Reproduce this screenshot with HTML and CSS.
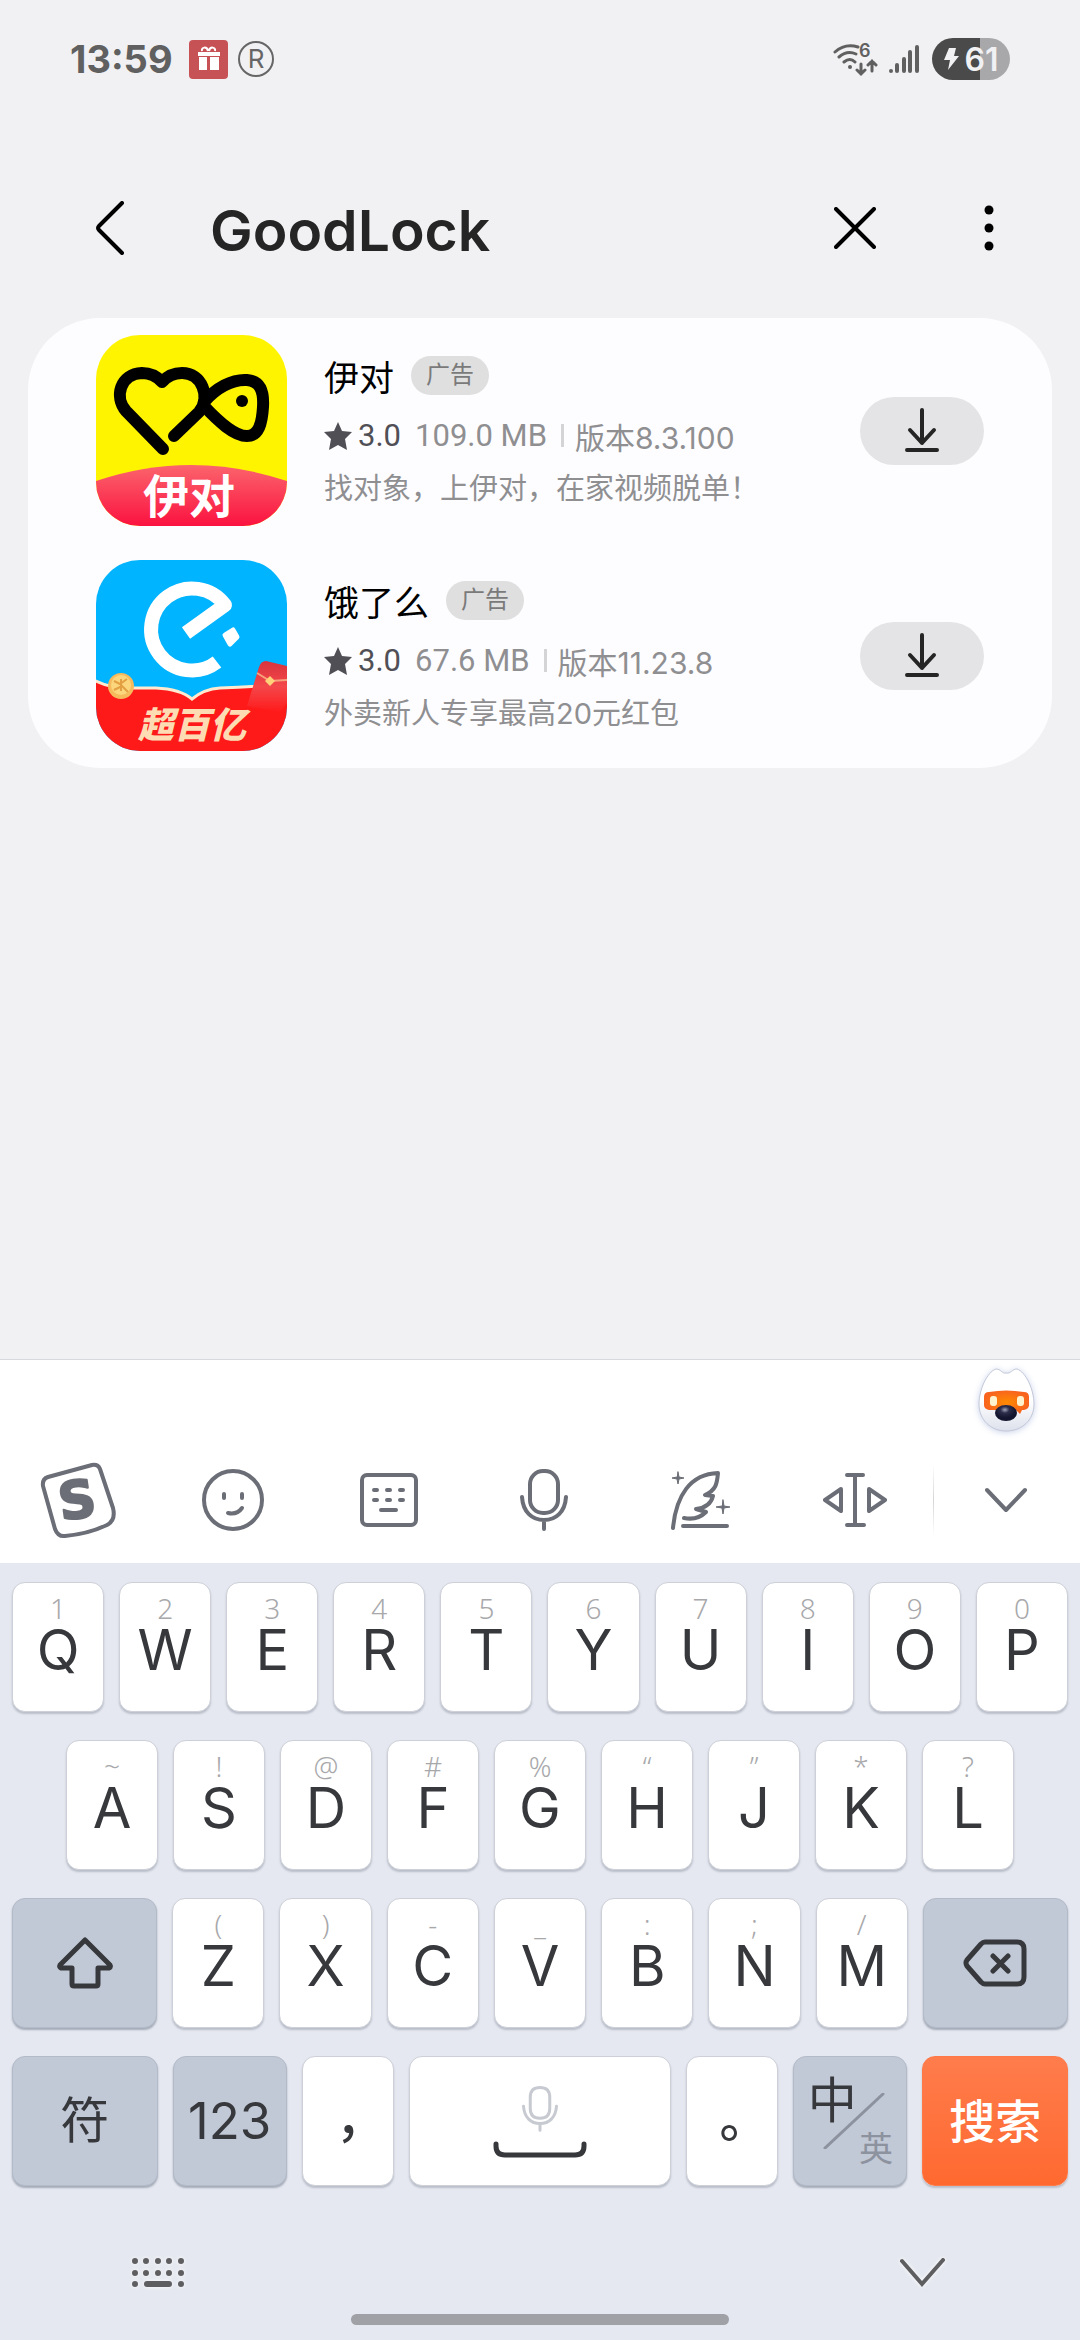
FILE: index.html
```html
<!DOCTYPE html>
<html lang="zh-CN">
<head>
    <meta charset="UTF-8">
    <meta name="viewport" content="width=device-width, initial-scale=1.0">
    <title>GoodLock</title>
    <link rel="stylesheet" href="styles.css">
</head>
<body>

<!-- Status bar -->
<div class="status-bar">
    <span class="clock">13:59</span>
    <svg class="gift-icon" width="39" height="39" viewBox="0 0 39 39">
        <rect width="39" height="39" rx="4" fill="#c75256"/>
        <path d="M9 12h22v4H9zM10 17h8v13h-8zM21 17h9v13h-9z" fill="#fff"/>
        <path d="M19 11c-1-5-7-4-6 0M20 11c1-5 7-4 6 0" fill="none" stroke="#fff" stroke-width="2"/>
    </svg>
    <svg class="r-icon" width="37" height="37" viewBox="0 0 37 37">
        <circle cx="18" cy="18" r="17" fill="none" stroke="#666" stroke-width="2"/>
        <text x="18" y="27" text-anchor="middle" font-size="26" fill="#666">R</text>
    </svg>
    <div class="status-right">
        <svg width="45" height="42" viewBox="0 -5 45 42" fill="none" stroke="#606060" stroke-width="3" stroke-linecap="round">
            <path d="M2 9Q12 0 25 4M6 14Q14 7 23 11M11 19Q17 14 22 19"/>
            <circle cx="17" cy="24" r="2" fill="#606060" stroke="none"/>
            <path d="M28 21v10M24 27l4 4 4-4M39 28V18M35 22l4-4 4 4"/>
            <text x="26" y="14" font-size="18" font-weight="600" fill="#606060" stroke="none">6</text>
        </svg>
        <svg width="32" height="30" viewBox="0 0 32 30" stroke="#606060" stroke-width="4" stroke-linecap="round">
            <path d="M2 27v0M8 21v6M15 15v12M21 8v19M28 3v24"/>
        </svg>
        <span class="battery">
            <svg width="15" height="22" viewBox="0 0 15 22"><path d="M5 0h7l-2 8h5L4 22l2-10H0z" fill="#f1f1f3"/></svg>
            61
        </span>
    </div>
</div>

<!-- Search header -->
<header class="search-header">
    <button type="button" class="icon-button" aria-label="返回">
        <svg width="28" height="54" viewBox="0 0 28 54"><path d="M26 2L3 25Q1 27 3 29L26 52" fill="none" stroke="#000" stroke-width="4" stroke-linecap="round"/></svg>
    </button>
    <input type="text" class="search-input" value="GoodLock" aria-label="搜索">
    <button type="button" class="icon-button" aria-label="清除">
        <svg width="42" height="42" viewBox="0 0 42 42"><path d="M2 2l38 38M40 2L2 40" stroke="#000" stroke-width="4" stroke-linecap="round"/></svg>
    </button>
    <button type="button" class="icon-button more-button" aria-label="更多选项">
        <svg width="10" height="46" viewBox="0 0 10 46"><circle cx="5" cy="5" r="4.5"/><circle cx="5" cy="23" r="4.5"/><circle cx="5" cy="41" r="4.5"/></svg>
    </button>
</header>

<!-- Results -->
<main class="results">
    <article class="app-row">
        <svg class="app-icon" viewBox="0 0 191 191">
            <defs>
                <linearGradient id="pink" x1="0" y1="0" x2="0" y2="1">
                    <stop offset="0" stop-color="#fb646c"/>
                    <stop offset="1" stop-color="#fb1240"/>
                </linearGradient>
            </defs>
            <rect width="191" height="191" fill="#fff400"/>
            <path d="M0 146Q95 114 191 146V191H0z" fill="url(#pink)"/>
            <g fill="none" stroke="#000" stroke-width="12" stroke-linecap="round" stroke-linejoin="round">
                <path d="M67 114L30 76C18 62 24 39 46 38Q58 38 66 47Q74 38 86 38C106 38 115 62 103 77L78 101"/>
                <path d="M108 67C120 53 136 44 151 45C164 46 168 56 167 72C166 88 163 101 151 101C138 101 122 86 108 71"/>
            </g>
            <circle cx="146" cy="66" r="6"/>
            <text x="93" y="178" text-anchor="middle" font-size="46" font-weight="700" fill="#fff">伊对</text>
        </svg>
        <div class="app-info">
            <h2>伊对 <span class="ad-badge">广告</span></h2>
            <p class="app-meta">
                <svg width="28" height="28" viewBox="0 0 28 28"><path d="M14 0l4 9 10 1-7 7 2 11-9-5-9 5 2-11-7-7 10-1z" fill="#504f56"/></svg>
                <span class="rating">3.0</span>
                <span class="size">109.0 MB</span>
                <span class="version">版本8.3.100</span>
            </p>
            <p class="app-desc">找对象，上伊对，在家视频脱单！</p>
        </div>
        <button type="button" class="download-button" aria-label="下载 伊对">
            <svg width="34" height="46" viewBox="0 0 34 46"><path d="M17 2v33M5 22l12 13 12-13M2 42h30"/></svg>
        </button>
    </article>

    <article class="app-row">
        <svg class="app-icon" viewBox="0 0 191 191">
            <defs>
                <linearGradient id="envelope" x1="0" y1="0" x2="0" y2="1">
                    <stop offset="0" stop-color="#d8333c"/>
                    <stop offset="0.5" stop-color="#f4474b"/>
                    <stop offset="1" stop-color="#ff1a1a"/>
                </linearGradient>
            </defs>
            <rect width="191" height="191" fill="#00b4ff"/>
            <path d="M121 102A41 41 0 1 1 129 45L90 73" fill="none" stroke="#fff" stroke-width="14" stroke-linejoin="round"/>
            <path d="M129 75L137 70 141 77 134 84z" fill="#fff" stroke="#fff" stroke-width="5" stroke-linejoin="round"/>
            <path d="M-4 119Q14 129 37 128H60Q84 129 96 139Q108 129 124 128Q160 127 195 123V195H-4z" fill="#ff1a1a" stroke="#ffe9cf" stroke-width="3"/>
            <circle cx="25" cy="126" r="13" fill="#f6ba5c"/>
            <circle cx="25" cy="125" r="10" fill="#fbd67c"/>
            <path d="M18 121l6 3 7-5M18 130l8-4 6 6M25 119v12" fill="none" stroke="#e3a043" stroke-width="2"/>
            <path d="M170 101L195 107V138L184 152 151 146 163 107Q165 101 170 101z" fill="url(#envelope)"/>
            <path d="M161 113l13 8 19-1" fill="none" stroke="#f8a27c" stroke-width="2"/>
            <path d="M174 116l5 5-5 5-5-5z" fill="#ffd27a"/>
            <text x="96" y="178" text-anchor="middle" font-size="36" font-weight="900" font-style="italic" fill="#fddcb4">超百亿</text>
        </svg>
        <div class="app-info">
            <h2>饿了么 <span class="ad-badge">广告</span></h2>
            <p class="app-meta">
                <svg width="28" height="28" viewBox="0 0 28 28"><path d="M14 0l4 9 10 1-7 7 2 11-9-5-9 5 2-11-7-7 10-1z" fill="#504f56"/></svg>
                <span class="rating">3.0</span>
                <span class="size">67.6 MB</span>
                <span class="version">版本11.23.8</span>
            </p>
            <p class="app-desc">外卖新人专享最高20元红包</p>
        </div>
        <button type="button" class="download-button" aria-label="下载 饿了么">
            <svg width="34" height="46" viewBox="0 0 34 46"><path d="M17 2v33M5 22l12 13 12-13M2 42h30"/></svg>
        </button>
    </article>
</main>

<!-- Keyboard -->
<section class="keyboard">
    <div class="mascot-strip">
        <button type="button" class="icon-button" aria-label="助手">
            <svg class="mascot" width="57" height="64" viewBox="0 0 57 64">
                <defs>
                    <linearGradient id="face" x1="0" y1="0" x2="0" y2="1">
                        <stop offset="0.5" stop-color="#fff"/>
                        <stop offset="1" stop-color="#dde1ec"/>
                    </linearGradient>
                    <radialGradient id="visor">
                        <stop offset="0" stop-color="#ff8a00"/>
                        <stop offset="1" stop-color="#f8641e"/>
                    </radialGradient>
                    <radialGradient id="nose" cx="0.45" cy="0.3">
                        <stop offset="0" stop-color="#a3a4b8"/>
                        <stop offset="0.4" stop-color="#2c2e4b"/>
                        <stop offset="1" stop-color="#14152e"/>
                    </radialGradient>
                </defs>
                <path d="M28 5C33 6 34 1 39 1C48 4 56 22 56 36C56 52 44 63 28 63C13 63 1 52 1 36C1 22 9 4 18 1C23 1 24 6 28 5z" fill="url(#face)" stroke="#c3c8d8"/>
                <path d="M6 29Q6 24 11 24Q28 21 46 24Q51 24 51 29V37Q51 41 46 42H44L42 46 38 42H11Q6 41 6 37z" fill="url(#visor)"/>
                <rect x="12" y="28" width="7" height="10" rx="3" fill="#fff2cf"/>
                <rect x="39" y="28" width="7" height="10" rx="3" fill="#fff2cf"/>
                <ellipse cx="28" cy="45" rx="11" ry="8" fill="url(#nose)"/>
            </svg>
        </button>
    </div>

    <div class="toolbar">
        <button type="button" aria-label="搜狗">
            <svg width="80" height="80" viewBox="0 0 80 80">
                <path d="M10 17L54 5Q60 4 62 9L75 48Q78 60 69 65Q50 74 27 76Q20 77 17 69L5 26Q4 19 10 17z"/>
                <text class="logo-letter" x="39" y="58" text-anchor="middle" transform="rotate(-8 40 40)">S</text>
            </svg>
        </button>
        <button type="button" aria-label="表情">
            <svg width="62" height="62" viewBox="0 0 62 62"><circle cx="31" cy="31" r="29"/><path d="M22 25v4M40 25v4M26 44Q35 46 40 39"/></svg>
        </button>
        <button type="button" aria-label="键盘">
            <svg width="58" height="54" viewBox="0 0 58 54"><rect x="2" y="2" width="54" height="50" rx="5"/><path d="M14 17h3M27 17h3M40 17h3M14 27h3M27 27h3M40 27h3M21 37h15"/></svg>
        </button>
        <button type="button" aria-label="语音">
            <svg width="48" height="62" viewBox="0 0 48 62"><rect x="10" y="2" width="28" height="42" rx="13"/><path d="M2 28C3 43 12 51 24 51C36 51 45 43 46 28M24 51v9"/></svg>
        </button>
        <button type="button" aria-label="智能写作">
            <svg width="60" height="60" viewBox="0 0 60 60">
                <path d="M3 58C6 26 20 4 48 3C47 14 46 20 35 25L43 26C41 34 36 38 26 39L36 42C31 47 24 50 14 48M13 56h44"/>
                <path class="sparkle" d="M8 2l1 5 5 1-5 1-1 5-1-5-5-1 5-1zM53 30l1 6 6 1-6 1-1 6-1-6-6-1 6-1z"/>
            </svg>
        </button>
        <button type="button" aria-label="移动光标">
            <svg width="64" height="56" viewBox="0 0 64 56"><path d="M32 3v50M24 3h16M24 53h17M18 17L2 28l16 11zM46 17l16 11-16 11z"/></svg>
        </button>
        <button type="button" class="toolbar-last" aria-label="收起">
            <svg width="42" height="26" viewBox="0 0 42 26"><path d="M2 3l19 20L40 3"/></svg>
        </button>
    </div>

    <div class="keys">
        <div class="key-row">
            <button type="button" class="key"><small>1</small>Q</button>
            <button type="button" class="key"><small>2</small>W</button>
            <button type="button" class="key"><small>3</small>E</button>
            <button type="button" class="key"><small>4</small>R</button>
            <button type="button" class="key"><small>5</small>T</button>
            <button type="button" class="key"><small>6</small>Y</button>
            <button type="button" class="key"><small>7</small>U</button>
            <button type="button" class="key"><small>8</small>I</button>
            <button type="button" class="key"><small>9</small>O</button>
            <button type="button" class="key"><small>0</small>P</button>
        </div>
        <div class="key-row key-row-inset">
            <button type="button" class="key"><small>~</small>A</button>
            <button type="button" class="key"><small>!</small>S</button>
            <button type="button" class="key"><small>@</small>D</button>
            <button type="button" class="key"><small>#</small>F</button>
            <button type="button" class="key"><small>%</small>G</button>
            <button type="button" class="key"><small>“</small>H</button>
            <button type="button" class="key"><small>”</small>J</button>
            <button type="button" class="key"><small>*</small>K</button>
            <button type="button" class="key"><small>?</small>L</button>
        </div>
        <div class="key-row">
            <button type="button" class="key key-wide key-gray" aria-label="大写">
                <svg width="56" height="52" viewBox="0 0 56 52"><path d="M28 3L53 28Q54 30 52 31H41V47Q41 49 39 49H17Q15 49 15 47V31H4Q2 30 3 28z"/></svg>
            </button>
            <button type="button" class="key"><small>(</small>Z</button>
            <button type="button" class="key"><small>)</small>X</button>
            <button type="button" class="key"><small>-</small>C</button>
            <button type="button" class="key"><small>_</small>V</button>
            <button type="button" class="key"><small>:</small>B</button>
            <button type="button" class="key"><small>;</small>N</button>
            <button type="button" class="key"><small>/</small>M</button>
            <button type="button" class="key key-wide key-gray" aria-label="删除">
                <svg width="64" height="48" viewBox="0 0 64 48"><path d="M22 3H54Q61 3 61 10V38Q61 45 54 45H22Q20 45 18 43L4 27Q2 24 4 21L18 5Q20 3 22 3zM30 17l15 15M45 17L30 32"/></svg>
            </button>
        </div>
        <div class="key-row">
            <button type="button" class="key key-wide key-gray key-symbol">符</button>
            <button type="button" class="key key-medium key-gray key-number">123</button>
            <button type="button" class="key key-punct">，</button>
            <button type="button" class="key key-space" aria-label="空格">
                <svg width="36" height="47" viewBox="0 0 48 62"><path d="M24 3Q37 3 37 16V31Q37 44 24 44Q11 44 11 31V16Q11 3 24 3M2 28C3 43 12 51 24 51C36 51 45 43 46 28M24 51v9" stroke="#c7cad1" stroke-width="4"/></svg>
                <svg width="94" height="18" viewBox="0 0 94 18"><path d="M3 3v2Q3 14 12 14H82Q91 14 91 5V3"/></svg>
            </button>
            <button type="button" class="key key-punct">。</button>
            <button type="button" class="key key-medium key-gray key-lang">
                <span class="lang-main">中</span>
                <svg width="62" height="56" viewBox="0 0 62 56"><path class="lang-slash" d="M2 55L60 1"/></svg>
                <span class="lang-alt">英</span>
            </button>
            <button type="button" class="key key-wide key-search">搜索</button>
        </div>
    </div>

    <!-- System navigation -->
    <div class="nav-icons">
        <button type="button" class="icon-button" aria-label="切换键盘">
            <svg width="53" height="30" viewBox="0 0 53 30" stroke="#5e5e60" stroke-width="6" stroke-linecap="round"><path d="M3 3v0M14 3v0M26 3v0M37 3v0M49 3v0M3 15v0M14 15v0M26 15v0M37 15v0M49 15v0M3 26v0M15 26h22M49 26v0"/></svg>
        </button>
        <button type="button" class="icon-button" aria-label="隐藏键盘">
            <svg width="46" height="30" viewBox="0 0 46 30"><path d="M3 3l20 23L44 2" fill="none" stroke="#5e5e60" stroke-width="4" stroke-linecap="round"/></svg>
        </button>
    </div>
    <div class="home-bar"></div>
</section>

</body>
</html>
```
FILE: styles.css
```css
* {
    box-sizing: border-box;
}

body {
    margin: 0;
    min-height: 100vh;
    display: flex;
    flex-direction: column;
    background-color: #f1f1f3;
    font-family: Inter, "Noto Sans CJK SC", sans-serif;
    color: #000;
}

button {
    border: none;
    padding: 0;
    background: none;
    font-family: inherit;
    color: inherit;
    cursor: pointer;
}

svg {
    display: block;
    flex-shrink: 0;
}

h2,
p {
    margin: 0;
    font-weight: 400;
}

.icon-button {
    display: flex;
}

/* Status bar */
.status-bar {
    display: flex;
    align-items: center;
    height: 82px;
    margin-top: 18px;
    padding: 0 70px;
}

.clock {
    font-size: 38px;
    font-weight: 700;
    color: #606060;
}

.gift-icon {
    margin-left: 16px;
}

.r-icon {
    margin-left: 10px;
}

.status-right {
    display: flex;
    align-items: center;
    gap: 11px;
    margin-left: auto;
}

.battery {
    display: flex;
    align-items: center;
    justify-content: center;
    gap: 6px;
    width: 78px;
    height: 42px;
    border-radius: 21px;
    background: linear-gradient(to right, #4a4a4a 61%, #a8a8aa 61%);
    color: #f1f1f3;
    font-size: 32px;
    font-weight: 600;
}

/* Search header */
.search-header {
    display: flex;
    align-items: center;
    height: 120px;
    margin-top: 68px;
    margin-bottom: 30px;
    padding: 0 86px 0 96px;
}

.search-input {
    flex: 1;
    min-width: 0;
    margin: 0 40px 0 86px;
    padding: 4px 0 0;
    border: none;
    outline: none;
    background: none;
    font-family: inherit;
    font-size: 57px;
    font-weight: 600;
    color: #252525;
}

.more-button {
    margin-left: 108px;
}

/* Results */
.results {
    margin: 0 28px;
    border-radius: 72px;
    background-color: #fdfdff;
}

.app-row {
    display: flex;
    align-items: center;
    padding: 17px 68px;
}

.app-icon {
    width: 191px;
    height: 191px;
    border-radius: 44px;
}

.app-info {
    flex: 1;
    margin-left: 37px;
    padding-top: 6px;
    color: #8f8f92;
}

.app-info h2 {
    display: flex;
    align-items: center;
    gap: 17px;
    height: 44px;
    font-size: 35px;
    color: #000;
}

.ad-badge {
    height: 39px;
    padding: 0 15px;
    border-radius: 20px;
    background-color: #dfdfe0;
    font-size: 24px;
    line-height: 37px;
    color: #7a7a7a;
}

.app-meta {
    display: flex;
    align-items: center;
    height: 56px;
    margin-top: 10px;
    font-family: Roboto, "Noto Sans CJK SC", sans-serif;
    font-size: 31px;
}

.rating {
    margin-left: 6px;
    color: #504f56;
}

.size {
    margin-left: 14px;
}

.version {
    margin-left: 14px;
    padding-left: 14px;
    background: linear-gradient(#d4d4d6, #d4d4d6) left center / 3px 23px no-repeat;
    font-family: Inter, "Noto Sans CJK SC", sans-serif;
    font-size: 30px;
}

.app-desc {
    font-size: 29px;
    line-height: 50px;
    white-space: nowrap;
}

.download-button {
    display: flex;
    align-items: center;
    justify-content: center;
    width: 124px;
    height: 68px;
    border-radius: 34px;
    background-color: #e4e4e6;
}

.download-button path {
    fill: none;
    stroke: #252525;
    stroke-width: 4;
    stroke-linecap: round;
    stroke-linejoin: round;
}

/* Keyboard */
.keyboard {
    margin-top: auto;
    border-top: 1px solid #d8d9dd;
    background-color: #e5e8f0;
}

.mascot-strip {
    display: flex;
    justify-content: flex-end;
    height: 76px;
    padding: 8px 45px 0 0;
    background-color: #fff;
}

.mascot {
    filter: drop-shadow(0 1px 3px #c9d3ea);
}

.toolbar {
    display: grid;
    grid-template-columns: repeat(6, 19fr) 18fr;
    height: 127px;
    background-color: #fff;
}

.toolbar button {
    display: flex;
    align-items: center;
    justify-content: center;
}

.toolbar svg {
    fill: none;
    stroke: #6b6e76;
    stroke-width: 4;
    stroke-linecap: round;
    stroke-linejoin: round;
}

.toolbar .sparkle {
    fill: #6b6e76;
    stroke-width: 1;
}

.toolbar .logo-letter {
    fill: #6b6e76;
    stroke: #6b6e76;
    stroke-width: 2;
    font-family: "DejaVu Sans", sans-serif;
    font-size: 52px;
    font-weight: 700;
}

.toolbar .toolbar-last {
    background: linear-gradient(transparent, #d4d5d9, transparent) left center / 1px 72px no-repeat;
}

.keys {
    display: flex;
    flex-direction: column;
    gap: 28px;
    padding: 19px 12px 0;
}

.key-row {
    display: flex;
    gap: 15px;
    height: 130px;
}

.key-row-inset {
    padding: 0 54px;
}

.key {
    display: flex;
    flex-direction: column;
    align-items: center;
    flex: 92 1 0;
    min-width: 0;
    padding-top: 8px;
    border: 1px solid #cdd0d8;
    border-radius: 13px;
    background-color: #fff;
    box-shadow: 0 2px 2px #b9bec9;
    font-size: 56px;
    line-height: 50px;
    color: #36383c;
}

.key small {
    font-family: "Noto Sans", sans-serif;
    font-size: 28px;
    font-weight: 300;
    line-height: 34px;
    color: #a8a8ab;
}

.key svg {
    fill: none;
    stroke: #36383c;
    stroke-width: 5;
    stroke-linecap: round;
    stroke-linejoin: round;
}

.key-medium {
    flex-grow: 114;
}

.key-wide {
    flex-grow: 146;
}

.key-wide,
.key-medium,
.key-punct {
    justify-content: center;
    padding-top: 0;
}

.key-gray {
    border-color: #b4bbc8;
    background-color: #c1c8d6;
    box-shadow: 0 2px 2px #a5acb9;
}

.key-symbol {
    font-size: 49px;
}

.key-number {
    font-size: 51px;
}

/* half-width forms keep the full-width marks centred on the key */
.key-punct {
    padding-bottom: 12px;
    font-family: "Noto Sans CJK SC", sans-serif;
    font-feature-settings: "halt";
    font-size: 50px;
    font-weight: 500;
}

.key-space {
    flex-grow: 264;
    justify-content: space-between;
    padding: 28px 0 26px;
}

.key-lang {
    display: grid;
    align-content: center;
    justify-content: center;
    font-size: 49px;
}

.key-lang > * {
    grid-area: 1 / 1;
}

.key-lang svg {
    align-self: center;
    margin-left: 15px;
}

.key .lang-slash {
    stroke: #8d929f;
    stroke-width: 3;
}

.lang-main {
    margin-bottom: 40px;
    padding-right: 36px;
}

.lang-alt {
    align-self: end;
    justify-self: end;
    font-size: 34px;
    line-height: 34px;
    color: #8d929f;
}

.key-search {
    border-color: #ff7846;
    background: linear-gradient(#ff7c4c, #ff6930);
    font-size: 46px;
    font-weight: 500;
    color: #fff;
}

/* System navigation */
.nav-icons {
    display: flex;
    justify-content: space-between;
    padding: 72px 135px 0 132px;
}

.nav-icons svg {
    filter: drop-shadow(0 0 2px #fff);
}

.home-bar {
    width: 35%;
    height: 11px;
    margin: 26px auto 0;
    border-radius: 6px;
    background-color: #a0a1a6;
}

.keyboard::after {
    content: "";
    display: block;
    height: 15px;
}
```
